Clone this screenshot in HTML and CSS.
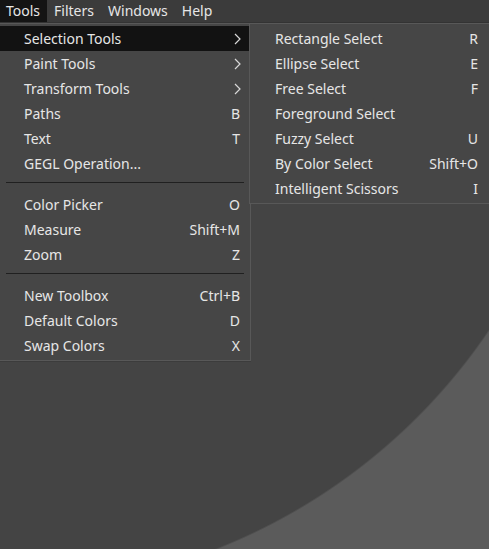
FILE: index.html
```html
<!DOCTYPE html>
<html>
<head>
<meta charset="utf-8">
<link rel="stylesheet" href="styles.css">
</head>
<body>
<div class="menubar">
  <div class="mb-item active">Tools</div>
  <div class="mb-item">Filters</div>
  <div class="mb-item">Windows</div>
  <div class="mb-item">Help</div>
</div>
<div class="canvas">
  <div class="menu main">
    <div class="row sel"><span>Selection Tools</span><svg class="chev" width="7" height="12" viewBox="0 0 7 12"><path d="M1 1 L6 6 L1 11" fill="none" stroke="#d8d8d8" stroke-width="1.2"/></svg></div>
    <div class="row"><span>Paint Tools</span><svg class="chev" width="7" height="12" viewBox="0 0 7 12"><path d="M1 1 L6 6 L1 11" fill="none" stroke="#d8d8d8" stroke-width="1.2"/></svg></div>
    <div class="row"><span>Transform Tools</span><svg class="chev" width="7" height="12" viewBox="0 0 7 12"><path d="M1 1 L6 6 L1 11" fill="none" stroke="#d8d8d8" stroke-width="1.2"/></svg></div>
    <div class="row"><span>Paths</span><span class="key">B</span></div>
    <div class="row"><span>Text</span><span class="key">T</span></div>
    <div class="row"><span>GEGL Operation...</span></div>
    <div class="sep"></div>
    <div class="row"><span>Color Picker</span><span class="key">O</span></div>
    <div class="row"><span>Measure</span><span class="key">Shift+M</span></div>
    <div class="row"><span>Zoom</span><span class="key">Z</span></div>
    <div class="sep"></div>
    <div class="row"><span>New Toolbox</span><span class="key">Ctrl+B</span></div>
    <div class="row"><span>Default Colors</span><span class="key">D</span></div>
    <div class="row"><span>Swap Colors</span><span class="key">X</span></div>
  </div>
  <div class="menu sub">
    <div class="row"><span>Rectangle Select</span><span class="key">R</span></div>
    <div class="row"><span>Ellipse Select</span><span class="key">E</span></div>
    <div class="row"><span>Free Select</span><span class="key">F</span></div>
    <div class="row"><span>Foreground Select</span></div>
    <div class="row"><span>Fuzzy Select</span><span class="key">U</span></div>
    <div class="row"><span>By Color Select</span><span class="key">Shift+O</span></div>
    <div class="row"><span>Intelligent Scissors</span><span class="key">I</span></div>
  </div>
</div>
</body>
</html>
```
FILE: styles.css
```css
html, body {
  margin: 0;
  padding: 0;
  width: 489px;
  height: 549px;
  overflow: hidden;
  font-family: "Noto Sans", "Open Sans", sans-serif;
  font-size: 14px;
  color: #e6e6e6;
  background: #3b3b3b;
}
.menubar {
  display: flex;
  height: 22px;
  background: #3b3b3b;
  border-bottom: 1px solid #333;
}
.mb-item {
  padding: 0 7px 0 6px;
  margin-right: 1px;
  line-height: 22px;
}
.mb-item.active {
  background: #141414;
}
.canvas {
  position: relative;
  height: 526px;
  background: radial-gradient(circle 591px at 0px -23px, #444444 99.7%, #5b5b5b 100%);
}
.menu {
  position: absolute;
  top: 0;
  background: #464646;
  border: 1px solid #585858;
  box-sizing: border-box;
  padding: 2px 0;
}
.menu.main {
  left: 0;
  width: 251px;
  border-left: none;
  box-shadow: 0 1px 0 #3c3c3c;
}
.menu.sub {
  left: 249px;
  width: 250px;
}
.row {
  display: flex;
  align-items: center;
  justify-content: space-between;
  height: 25px;
  padding: 0 10px 0 24px;
}
.menu.sub .row {
  padding: 0 20px 0 25px;
}
.row.sel {
  background: #121212;
}
.chev {
  margin-right: -1px;
}
.key {
  text-align: right;
}
.sep {
  height: 1px;
  background: #202020;
  margin: 6px 6px 9px 6px;
}
```
